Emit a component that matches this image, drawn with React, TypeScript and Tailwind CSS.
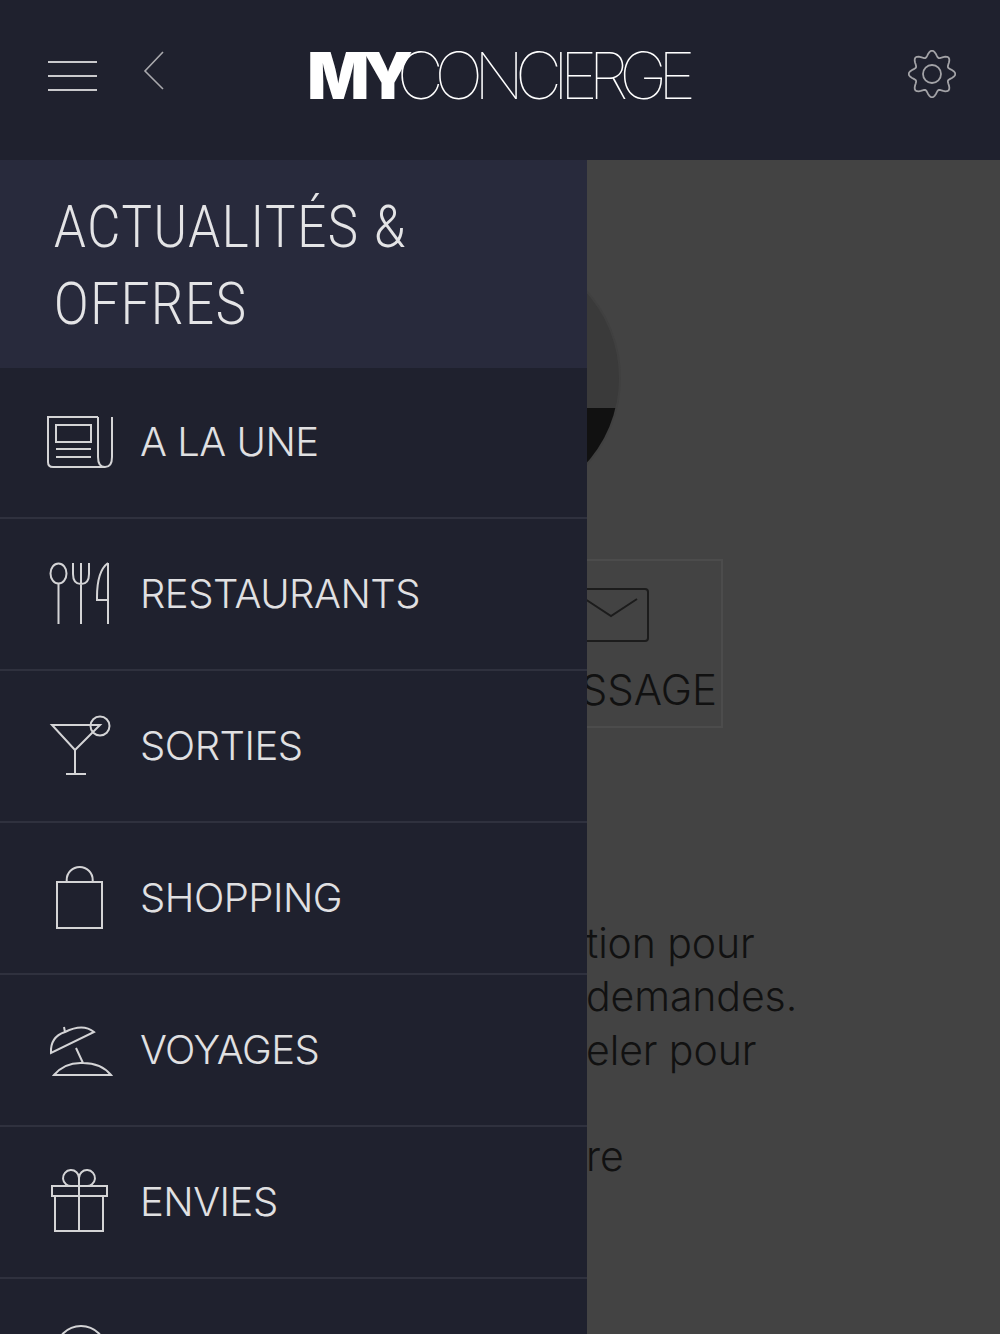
import React from 'react';

const navItems = [
  { label: 'A LA UNE', icon: <NewsIcon /> },
  { label: 'RESTAURANTS', icon: <CutleryIcon /> },
  { label: 'SORTIES', icon: <CocktailIcon /> },
  { label: 'SHOPPING', icon: <BagIcon /> },
  { label: 'VOYAGES', icon: <BeachIcon /> },
  { label: 'ENVIES', icon: <GiftIcon /> },
];

// eight rounded teeth, one of them pointing up
const gearPath =
  Array.from({ length: 96 }, (_, i) => {
    const a = (i / 96) * Math.PI * 2;
    const r = 20.3 + 3 * Math.cos(8 * a);
    return `${i === 0 ? 'M' : 'L'}${(24 + r * Math.sin(a)).toFixed(2)} ${(24 - r * Math.cos(a)).toFixed(2)}`;
  }).join('') + 'Z';

function IconBox({ children }: { children: React.ReactNode }) {
  return (
    <svg width="70" height="70" viewBox="0 0 70 70" fill="none" stroke="#d4d4d6" strokeWidth="2" className="shrink-0">
      {children}
    </svg>
  );
}

function NewsIcon() {
  return (
    <IconBox>
      <path d="M53 10H3v45q0 5 5 5h52" />
      <path d="M53 10v40q0 10 7 10t7-10V10" />
      <rect x="11" y="18" width="35" height="17" />
      <path d="M11 42h35M11 50h35" />
    </IconBox>
  );
}

function CutleryIcon() {
  return (
    <IconBox>
      <ellipse cx="13.5" cy="14.5" rx="8" ry="10" />
      <path d="M13.5 25v40" />
      <path d="M28 4v11q0 10 8 10t8-10V4M36 4v61" />
      <path d="M63 4v61M63 4q-11 8-11 34v3h11" />
    </IconBox>
  );
}

function CocktailIcon() {
  return (
    <IconBox>
      <path d="M7 14h48L30 39z" />
      <path d="M30 39v24M21 63h20" />
      <circle cx="55" cy="15" r="9.5" />
    </IconBox>
  );
}

function BagIcon() {
  return (
    <IconBox>
      <rect x="12" y="19" width="45" height="46" />
      <path d="M21.7 19v-2a13 13 0 0 1 26 0v2" />
    </IconBox>
  );
}

function BeachIcon() {
  return (
    <IconBox>
      <path d="M6 38Q5 22 20 17q18-9 29 0z" />
      <path d="M20 17l-1-5M31 33l7 15" />
      <path d="M9 60q11-13 29-12 18 0 28 12z" />
    </IconBox>
  );
}

function GiftIcon() {
  return (
    <IconBox>
      <rect x="7" y="19" width="55" height="10" />
      <rect x="10" y="29" width="48" height="35" />
      <path d="M34 11v53" />
      <path d="M34 19h-7a8 8 0 1 1 7-8zM34 19h7a8 8 0 1 0-7-8z" />
    </IconBox>
  );
}

export default function App() {
  return (
    <div className="relative h-[1334px] w-[1000px] overflow-hidden bg-[#434343] font-['Inter',sans-serif]">
      {/* Top bar */}
      <header className="grid h-40 grid-cols-[1fr_auto_1fr] items-center bg-[#1f212e] pb-2 pl-12 pr-[44px]">
        <div className="flex items-center gap-[46px]">
          <div className="flex w-[49px] flex-col gap-[12px]">
            <span className="h-[2px] bg-[#c9c9cc]" />
            <span className="h-[2px] bg-[#c9c9cc]" />
            <span className="h-[2px] bg-[#c9c9cc]" />
          </div>
          <svg width="22" height="40" viewBox="0 0 22 40" fill="none" stroke="#a9a9ad" strokeWidth="1.6" className="mb-[10px]">
            <path d="M20 1L2 20l18 18" />
          </svg>
        </div>
        <div className="mb-[1px] mr-[10px] flex items-baseline text-[65px] leading-none text-white">
          <span className="font-black tracking-[-7px]">MY</span>
          <span className="-ml-[9px] font-thin tracking-[-9.2px]">CONCIERGE</span>
        </div>
        <svg width="48" height="48" viewBox="0 0 48 48" fill="none" stroke="#a3a3a7" strokeWidth="1.8" className="mb-[4px] justify-self-end">
          <circle cx="24" cy="24" r="9" />
          <path d={gearPath} strokeLinejoin="round" />
        </svg>
      </header>

      {/* Page behind the drawer */}
      <main className="text-[#111111]">
        <div className="ml-[361px] mt-[88px] h-[260px] w-[260px] overflow-hidden rounded-full border-2 border-[#404040] bg-[#3a3a3a]">
          <div className="mt-[158px] h-[100px] bg-[#111111]" />
        </div>
        <div className="ml-[440px] mt-[51px] flex h-[169px] w-[283px] flex-col items-center border-2 border-[#4c4c4c]">
          <svg width="90" height="54" viewBox="0 0 90 54" fill="none" stroke="#1c1c1c" strokeWidth="2" className="ml-[44px] mt-[27px]">
            <rect x="1" y="1" width="88" height="52" rx="3" />
            <path d="M26 11l26 17 26-17" />
          </svg>
          <span className="ml-auto mr-[4px] mt-[27px] text-[42px] font-light leading-none">MESSAGE</span>
        </div>
        <div className="ml-[586px] mt-[189px] text-[41px] font-light leading-[53.4px] tracking-[-0.1px]">
          <p>tion pour</p>
          <p>demandes.</p>
          <p>eler pour</p>
          <p className="mt-[53px]">re</p>
        </div>
      </main>

      {/* Drawer */}
      <aside className="absolute bottom-0 left-0 top-40 w-[587px] bg-[#1f212e]">
        <h1 className="h-[208px] bg-[#282a3c] px-[54px] pt-[28px] font-['Roboto',sans-serif] text-[60px] font-light leading-[77px] tracking-[2px] text-[#e4e4e6]">
          <span className="block origin-left scale-x-[0.85] whitespace-nowrap">ACTUALITÉS &amp;</span>
          <span className="block origin-left scale-x-[0.85]">OFFRES</span>
        </h1>
        <ul className="-mt-px">
          {navItems.map(item => (
            <li key={item.label} className="flex h-[152px] items-center border-b-2 border-[#2f313e] pl-[45px]">
              {item.icon}
              <span className="ml-[25px] text-[40px] font-light leading-none tracking-[-0.5px] text-[#e0e0e2]">{item.label}</span>
            </li>
          ))}
        </ul>
        <div className="pl-[45px] pt-[45px]">
          <svg width="70" height="40" viewBox="0 0 70 40" fill="none" stroke="#d4d4d6" strokeWidth="2">
            <circle cx="36" cy="27" r="25" />
          </svg>
        </div>
      </aside>
    </div>
  );
}
